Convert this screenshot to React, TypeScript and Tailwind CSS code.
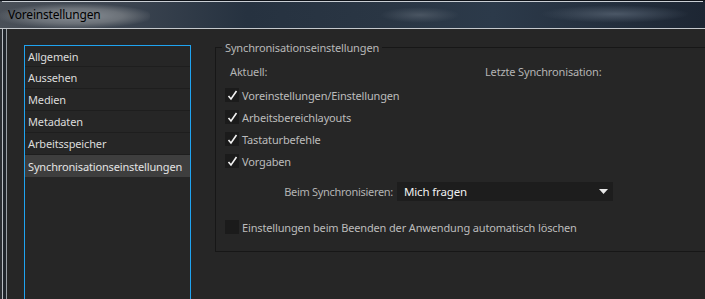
import React from "react";

const items = [
  "Allgemein",
  "Aussehen",
  "Medien",
  "Metadaten",
  "Arbeitsspeicher",
  "Synchronisationseinstellungen",
];

function Check({ checked }: { checked: boolean }) {
  return (
    <div className="w-[14px] h-[14px] bg-[#1b1b1b] flex items-center justify-center shrink-0">
      {checked && (
        <svg width="11" height="11" viewBox="0 0 11 11">
          <path d="M1.5 6 L4 9 L9.5 1" stroke="#f2f2f2" strokeWidth="1.6" fill="none" />
        </svg>
      )}
    </div>
  );
}

export default function App() {
  return (
    <div
      className="w-[705px] h-[299px] overflow-hidden bg-[#262626] flex flex-col text-[11px] tracking-[-0.15px] leading-none"
      style={{ fontFamily: '"Noto Sans", sans-serif' }}
    >
      {/* title bar */}
      <div className="h-[29px] shrink-0 relative border-t border-t-[#0e1218] bg-[linear-gradient(90deg,#4a5058_0%,#3b4450_18%,#263240_35%,#2a3644_55%,#2c3a4a_70%,#1d2633_100%)]">
        <div className="absolute inset-x-[2px] top-0 h-px bg-[#c9ced4]" />
        <div className="absolute left-0 top-[3px] w-[150px] h-[24px] rounded-full bg-[radial-gradient(ellipse_at_center,#8a9097_0%,#6b7178_45%,rgba(80,86,94,0)_75%)]" />
        <div className="absolute left-[380px] top-[6px] w-[80px] h-[16px] bg-[radial-gradient(ellipse_at_center,#4a5562_0%,rgba(40,50,62,0)_70%)]" />
        <div className="absolute left-[540px] top-[4px] w-[150px] h-[18px] bg-[radial-gradient(ellipse_at_center,#4b5766_0%,rgba(40,50,62,0)_70%)]" />
        <div className="absolute left-[8px] top-[8px] text-[12px] tracking-[-0.2px] text-black">
          Voreinstellungen
        </div>
        <div className="absolute inset-x-0 bottom-0 h-px bg-[#c4c8cc]" />
      </div>

      <div className="flex flex-1 min-h-0">
        {/* left frame */}
        <div className="w-[7px] shrink-0 flex bg-[#1f2226]">
          <div className="w-[2px] bg-[#2a2d31]" />
          <div className="w-px bg-[#b8bcc2]" />
          <div className="w-[3px] bg-[#20252b]" />
          <div className="w-px bg-[#9aa0a6]" />
        </div>

        <div className="flex flex-1 min-w-0 pl-[17px] pt-[16px]">
          {/* list */}
          <div className="w-[167px] shrink-0 border border-[#1fa3f0] border-b-0 flex flex-col">
            {items.map((t, i) => (
              <div
                key={t}
                className={
                  i === 5
                    ? "h-[22px] flex items-center pl-[3px] bg-[#3e3e3e] text-[#e4e4e4]"
                    : i === 0
                    ? "h-[21px] flex items-center pl-[3px] border-b border-[#1e1e1e] text-[#dcdcdc]"
                    : "h-[22px] flex items-center pl-[3px] border-b border-[#1e1e1e] text-[#dcdcdc]"
                }
              >
                {t}
              </div>
            ))}
          </div>

          {/* group */}
          <div className="ml-[24px] mt-[2px] w-[520px] shrink-0 h-[205px] border border-[#171717] relative">
            <div className="absolute left-[6px] -top-[6px] px-[3px] bg-[#262626] text-[#b8b8b8]">
              Synchronisationseinstellungen
            </div>
            <div className="flex pt-[18px] pl-[14px] text-[#b4b4b4]">
              <div className="w-[255px]">Aktuell:</div>
              <div>Letzte Synchronisation:</div>
            </div>
            <div className="flex flex-col pl-[9px] pt-[11px] gap-[8px] text-[#bcbcbc]">
              {["Voreinstellungen/Einstellungen", "Arbeitsbereichlayouts", "Tastaturbefehle", "Vorgaben"].map((t) => (
                <div key={t} className="flex items-center gap-[3px] h-[14px]">
                  <Check checked />
                  <span>{t}</span>
                </div>
              ))}
            </div>
            <div className="flex items-center pt-[14px]">
              <div className="w-[177px] text-right text-[#b4b4b4] tracking-[-0.3px]">Beim Synchronisieren:</div>
              <div className="ml-[4px] w-[216px] h-[19px] bg-[#1d1d1d] flex items-center justify-between pl-[7px] pr-[5px] text-[#f0f0f0] text-[11.5px]">
                <span>Mich fragen</span>
                <svg width="9" height="5" viewBox="0 0 9 5">
                  <path d="M0 0 H9 L4.5 5 Z" fill="#e8e8e8" />
                </svg>
              </div>
            </div>
            <div className="flex items-center gap-[3px] pl-[9px] pt-[19px] text-[#bcbcbc]">
              <Check checked={false} />
              <span>Einstellungen beim Beenden der Anwendung automatisch löschen</span>
            </div>
          </div>
        </div>
      </div>
    </div>
  );
}
